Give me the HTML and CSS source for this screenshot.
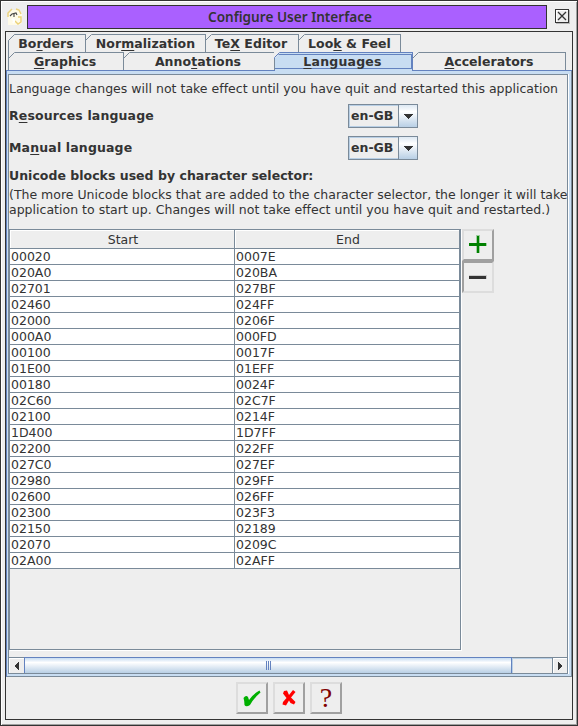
FILE: index.html
```
<!DOCTYPE html>
<html lang="en-GB">
<head>
<meta charset="utf-8">
<title>Configure User Interface</title>
<link rel="stylesheet" href="styles.css">
</head>
<body>
<div class="window">
  <header class="titlebar">
    <svg class="app-icon" width="16" height="18" viewBox="0 0 16 18"><path d="M2 5 5 2h7l3 4v9l-3 2H1V9z" fill="#fffbe8"/><path d="M1 9V5l4-4M9 1l3 1 2 4M11 9h3v5l-3 2-3-3" fill="none" stroke="#ecd27a" stroke-width="1.4"/><path d="M3 8 5 6l4-1 1 2M7 6v3" fill="none" stroke="#444" stroke-width="1.1"/><path d="M5 12c2-2 3 1 1 3" stroke="#fff" stroke-width="2" fill="none"/></svg>
    <h1 class="title">Configure User Interface</h1>
    <svg class="close" width="15" height="15" viewBox="0 0 15 15" shape-rendering="crispEdges"><path d="M1 14.5h14M14.5 1v14" stroke="#b8b8b8"/><rect x=".5" y=".5" width="13" height="13" fill="#fff" stroke="#333"/><rect x="2" y="2" width="11" height="11" fill="#eee"/><path d="M3 3l8 8M11 3l-8 8" stroke="#333" stroke-width="1.3" shape-rendering="auto"/></svg>
  </header>
  <main class="client">
    <nav class="tabs">
      <div class="tab-row upper">
        <div class="tab t1"><svg class="cut" width="7" height="7"><path d="M0 0h7L0 7z"/><path class="ln" d="M.5 7V6.5l6-6H7"/></svg><span>Bo<u>r</u>ders</span></div>
        <div class="tab t2"><svg class="cut" width="7" height="7"><path d="M1 0h6L1 7z"/><path class="ln" d="M.5 6.5l6-6"/></svg><span>Nor<u>m</u>alization</span></div>
        <div class="tab t3"><svg class="cut" width="7" height="7"><path d="M1 0h6L1 7z"/><path class="ln" d="M.5 6.5l6-6"/></svg><span>Te<u>X</u> Editor</span></div>
        <div class="tab t4"><svg class="cut" width="7" height="7"><path d="M1 0h6L1 7z"/><path class="ln" d="M.5 6.5l6-6"/></svg><span>Loo<u>k</u> &amp; Feel</span></div>
      </div>
      <div class="tab-row lower">
        <div class="tab t5"><svg class="cut" width="7" height="7"><path d="M1 0h6L1 7z"/><path class="ln" d="M.5 6.5l6-6"/></svg><span><u>G</u>raphics</span></div>
        <div class="tab t6"><svg class="cut" width="7" height="7"><path d="M1 0h6L1 7z"/><path class="ln" d="M.5 6.5l6-6"/></svg><span>Anno<u>t</u>ations</span></div>
        <div class="tab t7 selected"><svg class="cut" width="7" height="7"><path d="M0 0h7L0 7z"/><path class="ln" d="M.5 7V5.5l5-5H7"/></svg><span><u>L</u>anguages</span></div>
        <div class="tab t8"><svg class="cut" width="7" height="7"><path d="M1 0h6L1 7z"/><path class="ln" d="M.5 6.5l6-6"/></svg><span><u>A</u>ccelerators</span></div>
      </div>
    </nav>
    <section class="panel">
      <div class="pane">
        <div class="view">
          <p class="notice">Language changes will not take effect until you have quit and restarted this application</p>
          <div class="field"><label>R<u>e</u>sources language</label><div class="combo"><span>en-GB</span><i><svg width="10" height="5" shape-rendering="crispEdges"><path d="M0 0h10L5 5z" fill="#333"/></svg></i></div></div>
          <div class="field"><label>Ma<u>n</u>ual language</label><div class="combo"><span>en-GB</span><i><svg width="10" height="5" shape-rendering="crispEdges"><path d="M0 0h10L5 5z" fill="#333"/></svg></i></div></div>
          <h2 class="heading">Unicode blocks used by character selector:</h2>
          <p class="note n1">(The more Unicode blocks that are added to the character selector, the longer it will take</p>
          <p class="note n2">application to start up. Changes will not take effect until you have quit and restarted.)</p>
          <div class="blocks">
            <div class="table-pane">
              <table>
                <thead><tr><th>Start</th><th>End</th></tr></thead>
                <tbody>
                  <tr><td>00020</td><td>0007E</td></tr>
                  <tr><td>020A0</td><td>020BA</td></tr>
                  <tr><td>02701</td><td>027BF</td></tr>
                  <tr><td>02460</td><td>024FF</td></tr>
                  <tr><td>02000</td><td>0206F</td></tr>
                  <tr><td>000A0</td><td>000FD</td></tr>
                  <tr><td>00100</td><td>0017F</td></tr>
                  <tr><td>01E00</td><td>01EFF</td></tr>
                  <tr><td>00180</td><td>0024F</td></tr>
                  <tr><td>02C60</td><td>02C7F</td></tr>
                  <tr><td>02100</td><td>0214F</td></tr>
                  <tr><td>1D400</td><td>1D7FF</td></tr>
                  <tr><td>02200</td><td>022FF</td></tr>
                  <tr><td>027C0</td><td>027EF</td></tr>
                  <tr><td>02980</td><td>029FF</td></tr>
                  <tr><td>02600</td><td>026FF</td></tr>
                  <tr><td>02300</td><td>023F3</td></tr>
                  <tr><td>02150</td><td>02189</td></tr>
                  <tr><td>02070</td><td>0209C</td></tr>
                  <tr><td>02A00</td><td>02AFF</td></tr>
                </tbody>
              </table>
            </div>
            <div class="side">
              <div class="btn"><svg width="18" height="18" shape-rendering="crispEdges"><path d="M7 0h4v18H7zM0 8h18v3H0z" fill="#9fcf9f"/><path d="M8 1h2v17H8zM0 8h17v3H0z" fill="#008000"/></svg></div>
              <div class="btn minus"><svg width="18" height="18" shape-rendering="crispEdges"><path d="M0 8h18v4H0z" fill="#ccc"/><path d="M0 9h17v3H0z" fill="#333"/></svg></div>
            </div>
          </div>
        </div>
        <div class="scrollbar">
          <div class="arrow"><svg width="5" height="8" shape-rendering="crispEdges"><path d="M5 0v8L0 4z" fill="#333"/></svg></div>
          <div class="thumb"><b></b><b></b><b></b></div>
          <div class="track"></div>
          <div class="arrow right"><svg width="5" height="8" shape-rendering="crispEdges"><path d="M0 0v8L5 4z" fill="#333"/></svg></div>
        </div>
      </div>
    </section>
    <footer class="actions">
      <div class="btn"><svg width="18" height="17" viewBox="0 0 18 17"><path d="M.5 8Q3 4.500 5 7L6 10Q10 4 16.500.5L17.500 2.500Q11 8 7 15Q3 17.500 1.500 15Q1.500 11 .5 8Z" fill="#00b000"/></svg></div>
      <div class="btn"><svg width="14" height="16" viewBox="0 0 14 16"><path d="M2 1 5 .5 7 5 11 0l2.500 2L9 7.500 13.500 12 12 14.500 8.500 13 7 10.500 4 15.500.5 14.500 1 12 4.500 8 1 3.500z" fill="#f00"/></svg></div>
      <div class="btn help"><span>?</span></div>
    </footer>
  </main>
</div>
</body>
</html>
```
FILE: styles.css
```
* { box-sizing: border-box; }
body {
  margin: 0;
  width: 578px;
  height: 726px;
  overflow: hidden;
  background: #eee;
  color: #333;
  font: 12.5px/16px "DejaVu Sans", sans-serif;
}
h1, h2, p { margin: 0; }
svg { display: block; flex: none; }
u { text-decoration: underline; text-underline-offset: 2px; text-decoration-thickness: 1px; text-decoration-skip-ink: none; }
.window {
  width: 578px;
  height: 726px;
  border: 1px solid #333;
  box-shadow: inset 1px 1px #fff, inset -1px -1px #a0a0a0;
  padding: 4px;
  display: flex;
  flex-direction: column;
}
.titlebar { height: 26px; display: flex; align-items: flex-start; }
.app-icon { margin: 3px 4px 0 2px; }
.title {
  width: 520px;
  height: 24px;
  border: 1px solid #333;
  background: #aa60ff;
  font: 600 13.6px/22px "Noto Sans", sans-serif;
  text-align: center;
  padding-left: 6px;
}
.close { margin: 4px 0 0 8px; }
.client {
  width: 568px;
  height: 689px;
  border: 1px solid #333;
  display: flex;
  flex-direction: column;
}
.tabs { height: 38px; padding: 2px 0 0 2px; font-weight: bold; }
.tab-row { display: flex; height: 18px; }
.tab {
  position: relative;
  border-top: 1px solid #7a8a99;
  border-right: 1px solid #7a8a99;
  height: 18px;
  display: flex;
  justify-content: center;
  line-height: 18px;
  white-space: nowrap;
  letter-spacing: 0.05px;
  padding-right: 2px;
}
.cut { position: absolute; left: -1px; top: -1px; fill: #eee; }
.ln { fill: none; stroke: #7a8a99; }
.t1, .t5 { border-left: 1px solid #7a8a99; }
.t1 { width: 78px; }
.t2 { width: 120px; padding-right: 0; }
.t3 { width: 93px; }
.t4 { width: 102px; padding-right: 0; }
.t5 { width: 116px; }
.t6 { width: 151px; }
.t7 { width: 138px; letter-spacing: 0.2px; }
.t8 { width: 153px; padding-right: 0; }
.selected {
  height: 19px;
  background: #c8ddf2;
  border: 1px solid #6382bf;
  border-left: 0;
  border-bottom: 0;
  box-shadow: inset 0 -2px #c8ddf2, inset 0 1px #c8ddf2, inset 0 2px #6382bf, inset 0 -3px #6382bf, inset -1px 0 #6382bf;
}
.selected .ln { stroke: #6382bf; }
.panel {
  height: 607px;
  background: #c8ddf2;
  border: solid #6382bf;
  border-width: 1px 0 0 1px;
  box-shadow: inset 0 -1px #7a8a99, inset -1px 0 #7a8a99;
  padding: 3px 3px 3px 1px;
}
.pane {
  width: 560px;
  height: 600px;
  border: 1px solid #7a8a99;
  box-shadow: 1px 0 #fff;
  background: #eee;
}
.view { width: 558px; height: 582px; overflow: hidden; padding-top: 6px; }
.notice, .note { white-space: nowrap; height: 16px; letter-spacing: 0.01px; }
.field { display: flex; height: 32px; align-items: center; font-weight: bold; }
.notice + .field { margin-top: 3px; }
.field label { width: 339px; letter-spacing: 0.15px; }
.combo {
  width: 70px;
  height: 24px;
  border: 1px solid #7a8a99;
  box-shadow: inset 1px 1px #b8cfe5, inset -1px -1px #b8cfe5;
  display: flex;
}
.combo span { width: 49px; line-height: 22px; padding-left: 2px; }
.combo i {
  width: 19px;
  border-left: 1px solid #7a8a99;
  background: linear-gradient(#dde8f3, #fff 30%, #b8cfe5);
  display: flex;
  align-items: center;
  justify-content: center;
}
.heading { font: bold 12.5px/16px "DejaVu Sans", sans-serif; letter-spacing: 0.02px; margin-top: 4px; margin-bottom: 3px; white-space: nowrap; }
.note { height: 15px; line-height: 15px; }
.n1 { letter-spacing: 0; }
.n2 { letter-spacing: 0.015px; }
.blocks { display: flex; margin-top: 12px; }
.table-pane {
  width: 452px;
  height: 421px;
  border: 1px solid #7a8a99;
  box-shadow: 1px 1px #fff;
}
table { width: 450px; border-collapse: separate; border-spacing: 0; table-layout: fixed; }
th { height: 19px; padding: 1px 0 0 2px; font-weight: normal; line-height: 17px; border: solid #7a8a99; border-width: 0 1px 1px 0; box-shadow: inset 1px 1px #fff; }
td { height: 16px; padding: 0 0 0 1px; line-height: 15px; background: #fff; border: solid #7a8a99; border-width: 0 1px 1px 0; }
.side { margin-left: 1px; }
.btn {
  width: 32px;
  height: 32px;
  border: 2px solid;
  border-color: #ddd #a0a0a0 #a0a0a0 #ddd;
  display: flex;
  align-items: center;
  justify-content: center;
}
.side .btn svg { margin-top: -2px; }
.minus { border-color: #a0a0a0 #ddd #ddd #a0a0a0; }
.scrollbar { display: flex; height: 16px; border-top: 1px solid #7a8a99; }
.arrow { width: 15px; padding-right: 1px; display: flex; align-items: center; justify-content: center; box-shadow: inset 1px 1px #fff; }
.arrow.right { border-left: 1px solid #7a8a99; padding-right: 0; }
.thumb {
  width: 488px;
  border: solid #6382bf;
  border-width: 1px 1px 0;
  margin-top: -1px;
  background: linear-gradient(#c8ddf2, #fff 30%, #b8cfe5);
  display: flex;
  gap: 1px;
  align-items: center;
  justify-content: center;
}
.thumb b { width: 1px; height: 9px; background: #6382bf; }
.track { flex: 1; box-shadow: inset 1px 1px #b8cfe5; }
.actions { display: flex; justify-content: center; gap: 5px; padding-top: 5px; }
.help span { font: 28px/28px "Liberation Serif", serif; color: #800000; }
```
